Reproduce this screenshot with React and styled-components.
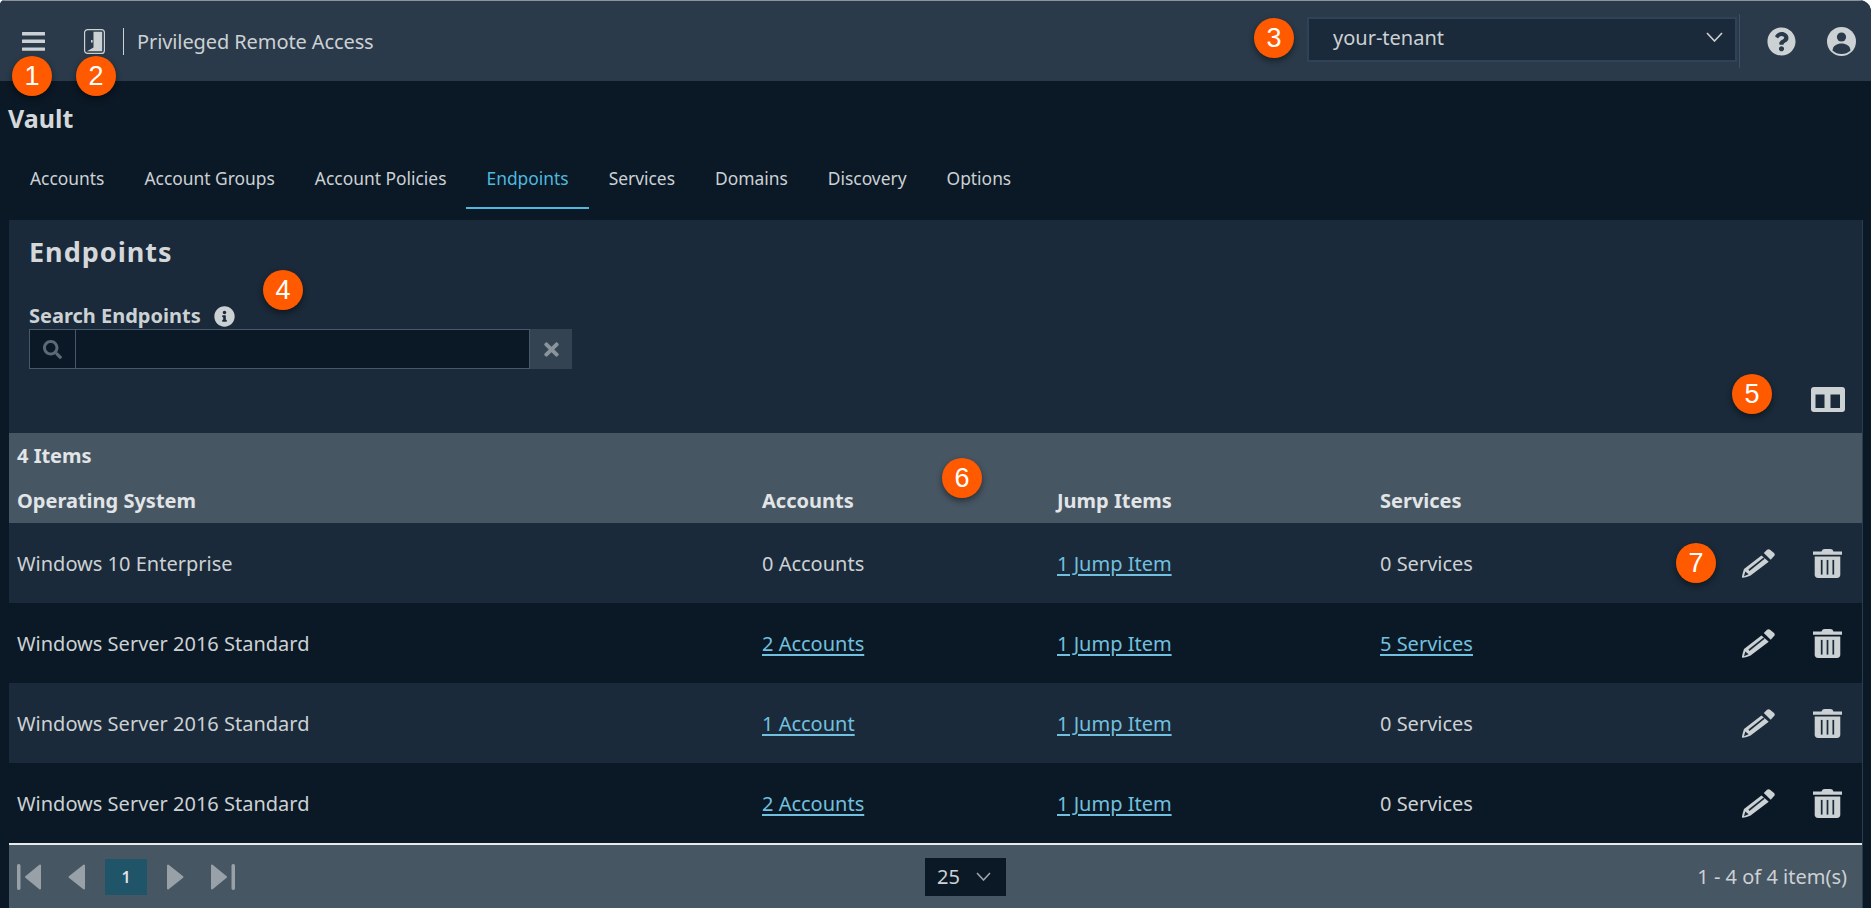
import React from "react";
import styled, { createGlobalStyle } from "styled-components";
import { FaQuestionCircle, FaInfoCircle, FaSearch, FaTimes } from "react-icons/fa";

const Global = createGlobalStyle`
  html, body { margin: 0; padding: 0; background: #fff; }
  body { font-family: "Noto Sans", "Open Sans", sans-serif; overflow: hidden; }
  * { box-sizing: border-box; }
`;

const Page = styled.div`
  position: relative;
  width: 1871px;
  height: 908px;
  display: flex;
  flex-direction: column;
  background: #0b1926;
  color: #ccd1d4;
  border-radius: 5px 12px 0 0;
  overflow: hidden;
`;

const TopBar = styled.header`
  height: 81px;
  flex: none;
  display: flex;
  align-items: center;
  background: #2a3a4a;
  border-top: 1px solid #8b949b;
  padding-left: 22px;
`;

const MenuIcon = styled.svg`
  width: 23px;
  height: 19px;
  margin-top: 1px;
  fill: #ccd1d4;
`;

const DoorIcon = styled.svg`
  width: 21px;
  height: 25px;
  margin-left: 39px;
`;

const BrandRule = styled.span`
  width: 1px;
  height: 27px;
  margin-left: 18px;
  background: #ccd1d4;
`;

const Brand = styled.span`
  font-size: 20px;
  letter-spacing: -0.1px;
  margin-left: 13px;
  color: #ccd1d4;
`;

const TenantSelect = styled.div`
  margin-left: auto;
  width: 430px;
  height: 45px;
  margin-top: -3px;
  background: #1a2a3a;
  border: 2px solid #2e4356;
  display: flex;
  align-items: center;
  justify-content: space-between;
  padding: 0 12px 5px 24px;
  font-size: 20px;
`;

const Chevron = styled.svg`
  width: ${(p) => p.$w}px;
  height: ${(p) => p.$h}px;
  fill: none;
  stroke: ${(p) => p.$c || "#ccd1d4"};
  stroke-width: 1.6;
`;

const HeaderRule = styled.span`
  width: 1px;
  height: 54px;
  margin-left: 2px;
  background: #3d5060;
`;

const HelpIcon = styled(FaQuestionCircle)`
  width: 29px;
  height: 29px;
  margin-left: 27px;
  color: #ccd1d4;
`;

const UserIcon = styled.svg`
  width: 29px;
  height: 29px;
  margin-left: 31px;
  margin-right: 15px;
`;

const Title = styled.h1`
  margin: 0;
  flex: none;
  height: 69px;
  padding: 19px 0 0 8px;
  font-size: 25px;
  line-height: 36px;
  font-weight: 700;
  color: #d4d8da;
`;

const Tabs = styled.nav`
  flex: none;
  height: 59px;
  display: flex;
  padding-left: 10px;
`;

const Tab = styled.a`
  padding: 16px 20px 0;
  font-size: 17.4px;
  line-height: 24px;
  color: ${(p) => (p.$active ? "#4fb8de" : "#ccd1d4")};
  border-bottom: 2px solid ${(p) => (p.$active ? "#4fb8de" : "transparent")};
`;

const Panel = styled.main`
  flex: 1;
  min-height: 0;
  margin: 11px 0 0 9px;
  width: 1854px;
  display: flex;
  flex-direction: column;
  background: #1a2a3a;
  border-right: 1px solid #2b3c4c;
`;

const PanelHead = styled.section`
  position: relative;
  height: 213px;
  flex: none;
  padding: 14px 20px 0;
`;

const PanelTitle = styled.h2`
  margin: 0;
  font-size: 27px;
  letter-spacing: 1px;
  line-height: 36px;
  font-weight: 700;
  color: #d4d8da;
`;

const FieldLabel = styled.label`
  margin-top: 34px;
  display: flex;
  align-items: center;
  gap: 13px;
  font-size: 20px;
  line-height: 24px;
  font-weight: 700;
  color: #ccd1d4;
`;

const InfoIcon = styled(FaInfoCircle)`
  width: 21px;
  height: 21px;
  color: #ccd1d4;
`;

const SearchRow = styled.div`
  display: flex;
  height: 40px;
  margin-top: 1px;
`;

const SearchAddon = styled.span`
  width: 46px;
  display: flex;
  align-items: center;
  justify-content: center;
  background: #0b1926;
  border: 1px solid #47586a;
  border-right: none;
  color: #5d6a75;
  font-size: 19px;
`;

const SearchInput = styled.input`
  width: 455px;
  background: #0b1926;
  border: 1px solid #47586a;
  outline: none;
  color: #ccd1d4;
`;

const ClearButton = styled.button`
  width: 42px;
  padding: 0;
  border: none;
  background: #334352;
  color: #8a949c;
  font-size: 21px;
  display: flex;
  align-items: center;
  justify-content: center;
`;

const ColumnsIcon = styled.svg`
  position: absolute;
  right: 17px;
  top: 167px;
  width: 34px;
  height: 25px;
`;

const TableHead = styled.div`
  height: 90px;
  flex: none;
  background: #475663;
  padding-top: 10px;
  color: #e2e5e7;
  font-weight: 700;
  font-size: 20px;
`;

const ItemCount = styled.div`
  padding-left: 8px;
  line-height: 26px;
`;

const Row = styled.div`
  display: grid;
  grid-template-columns: 745px 295px 323px 200px 1fr;
  padding-left: 8px;
  align-items: center;
  height: ${(p) => p.$h}px;
  font-size: 20px;
  background: ${(p) => (p.$dark ? "#0b1926" : "transparent")};
`;

const HeadRow = styled(Row)`
  margin-top: 18px;
  color: #e2e5e7;
`;

const Cell = styled.span``;

const LinkCell = styled.a`
  color: #72c0df;
  text-decoration: underline;
  text-underline-offset: 3px;
`;

const Actions = styled.div`
  display: flex;
  justify-content: flex-end;
  align-items: center;
  gap: 38px;
  padding-right: 20px;
`;

const ActionIcon = styled.svg`
  width: ${(p) => p.$w}px;
  height: 29px;
  fill: #ccd1d4;
`;

const Footer = styled.footer`
  flex: 1;
  display: grid;
  grid-template-columns: 908px 1fr auto;
  align-items: center;
  background: #475663;
  border-top: 2px solid #e6eaec;
  padding: 0 15px 0 8px;
`;

const Pager = styled.div`
  display: flex;
  align-items: center;
  gap: 20px;
`;

const NavIcon = styled.svg`
  height: 26px;
  width: ${(p) => p.$w}px;
  margin: ${(p) => p.$m || 0};
  fill: #98a1a8;
  stroke: #98a1a8;
  stroke-linejoin: round;
`;

const PageNumber = styled.span`
  width: 42px;
  height: 36px;
  background: #205468;
  display: flex;
  align-items: center;
  justify-content: center;
  font-size: 16px;
  font-weight: 600;
  color: #dfe3e5;
`;

const SizeSelect = styled.div`
  width: 81px;
  height: 38px;
  background: #0b1926;
  display: flex;
  align-items: center;
  justify-content: space-between;
  padding: 0 15px 0 12px;
  font-size: 20px;
`;

const Range = styled.span`
  font-size: 20px;
  color: #ccd1d4;
`;

const Badge = styled.span`
  position: absolute;
  left: ${(p) => p.$x}px;
  top: ${(p) => p.$y}px;
  width: 40px;
  height: 40px;
  border-radius: 50%;
  background: #ff5a00;
  box-shadow: 0 3px 6px rgba(0, 0, 0, 0.45);
  color: #fff;
  font-family: "Liberation Sans", Arial, sans-serif;
  font-size: 27px;
  line-height: 40px;
  text-align: center;
`;

const rows = [
  { os: "Windows 10 Enterprise", acc: "0 Accounts", accLink: false, svc: "0 Services", svcLink: false },
  { os: "Windows Server 2016 Standard", acc: "2 Accounts", accLink: true, svc: "5 Services", svcLink: true },
  { os: "Windows Server 2016 Standard", acc: "1 Account", accLink: true, svc: "0 Services", svcLink: false },
  { os: "Windows Server 2016 Standard", acc: "2 Accounts", accLink: true, svc: "0 Services", svcLink: false },
];

const tabs = ["Accounts", "Account Groups", "Account Policies", "Endpoints", "Services", "Domains", "Discovery", "Options"];

const badges = [
  [12, 56], [76, 56], [1254, 18], [263, 270], [1732, 374], [942, 458], [1676, 543],
];

const PencilIcon = () => (
  <ActionIcon $w={33} viewBox="0 0 100 87">
    <path d="M66 12L76 2Q80-1 85 2L97 12Q101 16 98 20L87 32Z" />
    <path d="M59 19L81 38L26 80Q14 85 3 87Q-1 87 0 83Q2 72 6 60Z" />
    <path d="M21 64L67 27" fill="none" stroke="#1a2a3a" strokeWidth="5" />
    <path d="M6 82L10 68L20 76Z" fill="#1a2a3a" />
  </ActionIcon>
);

const TrashIcon = () => (
  <ActionIcon $w={29} viewBox="0 0 85 85">
    <path d="M25 7Q27 0 34 0H51Q58 0 60 7H85V17H0V7Z" />
    <path d="M5 22H80V75Q80 85 70 85H15Q5 85 5 75Z" />
    <rect x="23" y="32" width="5" height="43" fill="#1a2a3a" />
    <rect x="40" y="32" width="5" height="43" fill="#1a2a3a" />
    <rect x="57" y="32" width="5" height="43" fill="#1a2a3a" />
  </ActionIcon>
);

export default function App() {
  return (
    <Page>
      <Global />
      <TopBar>
        <MenuIcon viewBox="0 0 23 19">
          <rect x="0" y="0" width="23" height="3.4" rx="0.5" />
          <rect x="0" y="7.6" width="23" height="3.4" rx="0.5" />
          <rect x="0" y="15.4" width="23" height="3.4" rx="0.5" />
        </MenuIcon>
        <DoorIcon viewBox="0 0 21 25">
          <rect x="0.6" y="0.6" width="19.8" height="23.8" rx="3" fill="none" stroke="#ccd1d4" strokeWidth="1.2" />
          <path d="M9.5 2.8H18.2V22.2H3L9.5 18.6Z" fill="#ccd1d4" />
          <rect x="7" y="11" width="1.6" height="2.6" fill="#ccd1d4" />
        </DoorIcon>
        <BrandRule />
        <Brand>Privileged Remote Access</Brand>
        <TenantSelect>
          your-tenant
          <Chevron $w={17} $h={10} viewBox="0 0 17 10">
            <polyline points="1,1 8.5,9 16,1" />
          </Chevron>
        </TenantSelect>
        <HeaderRule />
        <HelpIcon />
        <UserIcon viewBox="0 0 29 29">
          <circle cx="14.5" cy="14.5" r="14.5" fill="#ccd1d4" />
          <circle cx="14.5" cy="10" r="4.6" fill="#2a3a4a" />
          <path d="M5.5 23.5C6 18.5 10 16.5 14.5 16.5S23 18.5 23.5 23.5C21 26 18 27 14.5 27S8 26 5.5 23.5Z" fill="#2a3a4a" />
        </UserIcon>
      </TopBar>

      <Title>Vault</Title>

      <Tabs>
        {tabs.map((t) => (
          <Tab key={t} $active={t === "Endpoints"}>{t}</Tab>
        ))}
      </Tabs>

      <Panel>
        <PanelHead>
          <PanelTitle>Endpoints</PanelTitle>
          <FieldLabel>
            Search Endpoints
            <InfoIcon />
          </FieldLabel>
          <SearchRow>
            <SearchAddon><FaSearch /></SearchAddon>
            <SearchInput />
            <ClearButton><FaTimes /></ClearButton>
          </SearchRow>
          <ColumnsIcon viewBox="0 0 34 25">
            <rect width="34" height="25" rx="3" fill="#ccd1d4" />
            <rect x="4.5" y="7.5" width="9" height="13.5" fill="#1a2a3a" />
            <rect x="19.5" y="7.5" width="9.5" height="13.5" fill="#1a2a3a" />
          </ColumnsIcon>
        </PanelHead>

        <TableHead>
          <ItemCount>4 Items</ItemCount>
          <HeadRow $h={26}>
            <Cell>Operating System</Cell>
            <Cell>Accounts</Cell>
            <Cell>Jump Items</Cell>
            <Cell>Services</Cell>
          </HeadRow>
        </TableHead>

        {rows.map((r, i) => (
          <Row key={i} $h={80} $dark={i % 2 === 1}>
            <Cell>{r.os}</Cell>
            <Cell>{r.accLink ? <LinkCell>{r.acc}</LinkCell> : r.acc}</Cell>
            <Cell><LinkCell>1 Jump Item</LinkCell></Cell>
            <Cell>{r.svcLink ? <LinkCell>{r.svc}</LinkCell> : r.svc}</Cell>
            <Actions>
              <PencilIcon />
              <TrashIcon />
            </Actions>
          </Row>
        ))}

        <Footer>
          <Pager>
            <NavIcon $w={24} viewBox="0 0 24 26" $m="0 7px 0 0">
              <rect x="0.5" y="0.5" width="2.5" height="25" rx="0.8" />
              <path d="M23 1.5V24.5L9 13Z" strokeWidth="2" />
            </NavIcon>
            <NavIcon $w={17} viewBox="0 0 17 26">
              <path d="M16 1.5V24.5L1.5 13Z" strokeWidth="2" />
            </NavIcon>
            <PageNumber>1</PageNumber>
            <NavIcon $w={17} viewBox="0 0 17 26">
              <path d="M1 1.5V24.5L15.5 13Z" strokeWidth="2" />
            </NavIcon>
            <NavIcon $w={24} viewBox="0 0 24 26" $m="0 0 0 7px">
              <path d="M1 1.5V24.5L15 13Z" strokeWidth="2" />
              <rect x="21" y="0.5" width="2.5" height="25" rx="0.8" />
            </NavIcon>
          </Pager>
          <SizeSelect>
            25
            <Chevron $w={15} $h={9} $c="#9aa4ab" viewBox="0 0 15 9">
              <polyline points="1,1 7.5,8 14,1" />
            </Chevron>
          </SizeSelect>
          <Range>1 - 4 of 4 item(s)</Range>
        </Footer>
      </Panel>

      {badges.map(([x, y], i) => (
        <Badge key={i} $x={x} $y={y}>{i + 1}</Badge>
      ))}
    </Page>
  );
}
